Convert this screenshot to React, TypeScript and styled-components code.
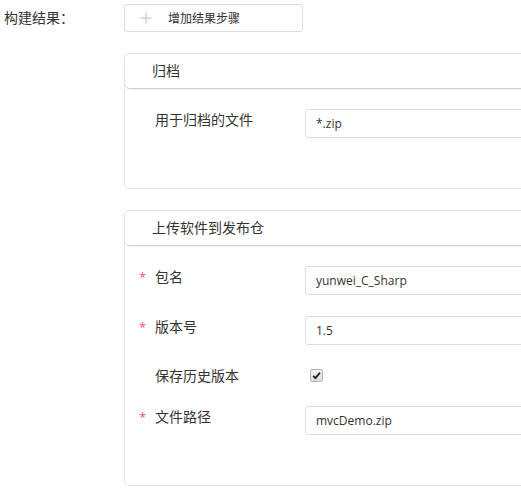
import React from "react";
import styled, { createGlobalStyle } from "styled-components";

const GlobalStyle = createGlobalStyle`
  html, body {
    margin: 0;
    padding: 0;
    background: #ffffff;
    overflow: hidden;
  }
  body {
    font-family: "Open Sans", "Noto Sans CJK SC", sans-serif;
    color: #333333;
  }
`;

export const Page = styled.div`
  display: flex;
  align-items: flex-start;
  padding: 4px 0 0 4px;
  width: 640px;
`;

export const SectionLabel = styled.div`
  width: 120px;
  flex-shrink: 0;
  font-size: 14px;
  line-height: 28px;
  color: #333333;
`;

export const Content = styled.div`
  display: flex;
  flex-direction: column;
  gap: 21px;
  width: 480px;
`;

export const AddButton = styled.button`
  display: flex;
  align-items: center;
  gap: 16px;
  width: 179px;
  height: 28px;
  padding: 0 0 0 15px;
  box-sizing: border-box;
  border: 1px solid #dddddd;
  border-radius: 3px;
  background: #ffffff;
  font-family: inherit;
  font-size: 12px;
  color: #333333;
  cursor: pointer;
`;

export const Panel = styled.section`
  border: 1px solid #e3e3e3;
  border-radius: 5px;
  background: #ffffff;
`;

export const PanelHeader = styled.div`
  height: 34px;
  line-height: 34px;
  padding-left: 27px;
  font-size: 14px;
  color: #333333;
  border-bottom: 1px solid #d2d2d2;
  border-radius: 5px;
  box-shadow: 0 1px 1px rgba(0, 0, 0, 0.06);
`;

export const PanelBody = styled.div`
  display: flex;
  flex-direction: column;
  gap: 21px;
  padding: 20px 0 50px 14px;
`;

export const FormRow = styled.div<{ $center?: boolean }>`
  display: flex;
  align-items: ${(p) => (p.$center ? "center" : "flex-start")};
  height: ${(p) => (p.$center ? "19px" : "29px")};
`;

export const Marker = styled.span`
  width: 16px;
  flex-shrink: 0;
  font-size: 13px;
  line-height: 22px;
  color: #f0506e;
`;

export const FieldLabel = styled.label<{ $compact?: boolean }>`
  width: 150px;
  flex-shrink: 0;
  font-size: 14px;
  line-height: ${(p) => (p.$compact ? "19px" : "22px")};
  color: #333333;
`;

export const TextInput = styled.input`
  flex: 1;
  height: 29px;
  box-sizing: border-box;
  padding: 0 10px;
  border: 1px solid #dddddd;
  border-radius: 3px;
  font-family: inherit;
  font-size: 12px;
  color: #333333;
  outline: none;
`;

export const CheckBox = styled.span`
  display: inline-flex;
  align-items: center;
  justify-content: center;
  width: 11px;
  height: 11px;
  margin-left: 5px;
  border: 1px solid #b5b5b5;
  border-radius: 2px;
  background: linear-gradient(#f2f2f2, #dcdcdc);
`;

const PlusIcon = () => (
  <svg width="12" height="12" viewBox="0 0 12 12">
    <path d="M6 0.5v11M0.5 6h11" stroke="#bdbdbd" strokeWidth="1" fill="none" />
  </svg>
);

const CheckMark = () => (
  <svg width="9" height="9" viewBox="0 0 9 9">
    <path d="M1.2 4.8l2.2 2.3L8 1.6" stroke="#222" strokeWidth="1.8" fill="none" />
  </svg>
);

interface FieldProps {
  label: string;
  value: string;
  required?: boolean;
}

const Field: React.FC<FieldProps> = ({ label, value, required }) => (
  <FormRow>
    <Marker>{required ? "*" : ""}</Marker>
    <FieldLabel>{label}</FieldLabel>
    <TextInput defaultValue={value} />
  </FormRow>
);

const App: React.FC = () => {
  return (
    <>
      <GlobalStyle />
      <Page>
        <SectionLabel>构建结果：</SectionLabel>
        <Content>
          <AddButton>
            <PlusIcon />
            增加结果步骤
          </AddButton>
          <Panel>
            <PanelHeader>归档</PanelHeader>
            <PanelBody>
              <Field label="用于归档的文件" value="*.zip" />
            </PanelBody>
          </Panel>
          <Panel>
            <PanelHeader>上传软件到发布仓</PanelHeader>
            <PanelBody>
              <Field label="包名" value="yunwei_C_Sharp" required />
              <Field label="版本号" value="1.5" required />
              <FormRow $center>
                <Marker />
                <FieldLabel $compact>保存历史版本</FieldLabel>
                <CheckBox>
                  <CheckMark />
                </CheckBox>
              </FormRow>
              <Field label="文件路径" value="mvcDemo.zip" required />
            </PanelBody>
          </Panel>
        </Content>
      </Page>
    </>
  );
};

export default App;
